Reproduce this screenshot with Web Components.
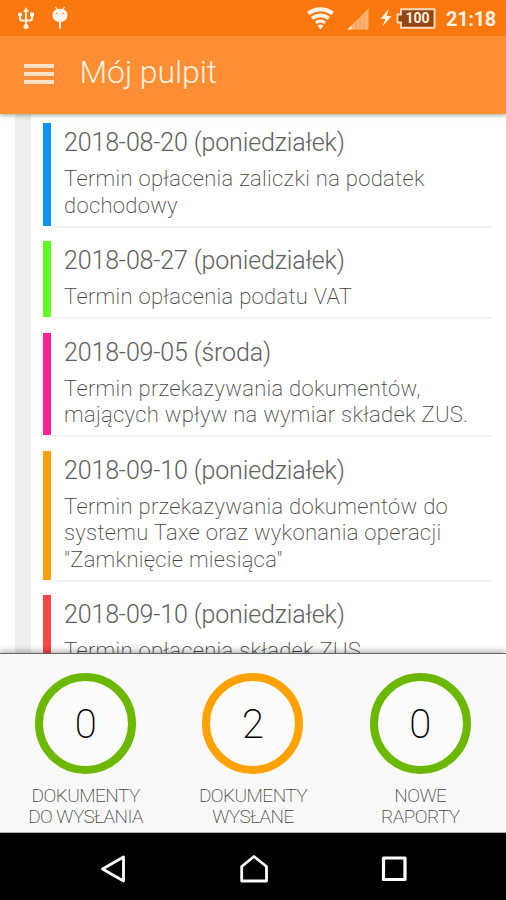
<!DOCTYPE html>
<html lang="pl">
<head>
<meta charset="utf-8">
<title>Mój pulpit</title>
<style>
  html, body { height: 100%; }
  body {
    margin: 0;
    overflow: hidden;
    background: #fff;
    color: #444;
    font-family: Roboto, "Liberation Sans", sans-serif;
    font-weight: 300;
  }
</style>
</head>
<body>
<dashboard-app>
  <status-bar slot="top" time="21:18" battery="100"></status-bar>
  <app-bar slot="top">Mój pulpit</app-bar>

  <term-item color="#0b93fc" date="2018-08-20 (poniedziałek)">Termin opłacenia zaliczki na podatek<br>dochodowy</term-item>
  <term-item color="#5ffc28" date="2018-08-27 (poniedziałek)">Termin opłacenia podatu VAT</term-item>
  <term-item color="#fc2498" date="2018-09-05 (środa)">Termin przekazywania dokumentów,<br>mających wpływ na wymiar składek ZUS.</term-item>
  <term-item color="#fca10b" date="2018-09-10 (poniedziałek)">Termin przekazywania dokumentów do<br>systemu Taxe oraz wykonania operacji<br>"Zamknięcie miesiąca"</term-item>
  <term-item color="#fc4548" date="2018-09-10 (poniedziałek)">Termin opłacenia składek ZUS</term-item>

  <doc-counter slot="counters" color="#6cb800" value="0">DOKUMENTY<br>DO WYSŁANIA</doc-counter>
  <doc-counter slot="counters" color="#ffa200" value="2">DOKUMENTY<br>WYSŁANE</doc-counter>
  <doc-counter slot="counters" color="#6cb800" value="0">NOWE<br>RAPORTY</doc-counter>

  <nav-bar slot="bottom"></nav-bar>
</dashboard-app>

<script>
class BaseElement extends HTMLElement {
  constructor () {
    super()
    const template = document.createElement('template')
    template.innerHTML = this.constructor.template()
    this.attachShadow({ mode: 'open' })
    this.shadowRoot.appendChild(document.importNode(template.content, true))
  }
}

class DashboardApp extends BaseElement {
  static template () {
    return `
      <style>
        :host {
          display: flex;
          flex-direction: column;
          width: 506px;
          height: 900px;
          overflow: hidden;
        }
        .top {
          flex: none;
          z-index: 1;
          box-shadow: 0 1px 5px rgba(0, 0, 0, .4);
        }
        .list {
          flex: 1;
          min-height: 0;
          display: flex;
          overflow: hidden;
        }
        .rail {
          flex: none;
          width: 16px;
          margin-left: 15px;
          background: #eee;
        }
        .items {
          flex: 1;
          display: flex;
          flex-direction: column;
          gap: 15.600px;
          padding: 9.300px 14px 0 11.5px;
        }
        .counters {
          flex: none;
          box-sizing: border-box;
          height: 180px;
          display: flex;
          justify-content: space-between;
          padding: 19px 2px 0 2px;
          border-top: 1px solid #666;
          border-bottom: 1px solid #aaa;
          background: #f9f9f9;
          box-shadow: 0 -1px 7px rgba(0, 0, 0, .4);
          z-index: 1;
        }
      </style>
      <div class="top"><slot name="top"></slot></div>
      <div class="list">
        <div class="rail"></div>
        <div class="items"><slot></slot></div>
      </div>
      <div class="counters"><slot name="counters"></slot></div>
      <slot name="bottom"></slot>
    `
  }
}

class StatusBar extends BaseElement {
  connectedCallback () {
    this.shadowRoot.querySelector('.time').textContent = this.getAttribute('time')
    this.shadowRoot.querySelector('.level').textContent = this.getAttribute('battery')
  }

  static template () {
    return `
      <style>
        :host {
          display: flex;
          align-items: center;
          height: 36px;
          background: #fa780d;
          color: #fff3e6;
        }
        svg { display: block; flex: none; }
        .usb { margin-left: 17px; }
        .debug { margin-left: 17px; }
        .wifi { margin-left: auto; }
        .signal { margin-left: 13px; }
        .bolt { margin-left: 11px; }
        .battery {
          display: grid;
          margin-left: 4px;
        }
        .battery > * { grid-area: 1 / 1; }
        .level {
          width: 33px;
          margin-left: 5px;
          line-height: 21px;
          text-align: center;
          font-size: 14px;
          font-weight: 700;
        }
        .time {
          width: 50px;
          margin: 2px 10px 0 10px;
          font-size: 20px;
          line-height: 24px;
          letter-spacing: -.3px;
          font-weight: 700;
          white-space: nowrap;
        }
      </style>
      <svg class="usb" width="18" height="24" viewBox="0 0 18 24">
        <g fill="none" stroke="#fff3e6" stroke-width="2">
          <path d="M9 4v17M3 9v3.5q0 2 2 2h8q2 0 2-2V9"/>
        </g>
        <g fill="#fff3e6">
          <path d="M9 1l2.800 5H6.200z"/>
          <circle cx="3" cy="8.500" r="2.100"/>
          <rect x="13" y="6.500" width="4" height="4"/>
          <circle cx="9" cy="20.500" r="2.500"/>
        </g>
      </svg>
      <svg class="debug" width="16" height="24" viewBox="0 0 16 24">
        <g fill="#fff3e6">
          <path d="M.5 9Q.5 4.500 4.500 3.500L3 1.200 4 .7 5.600 3Q8 2.400 10.400 3L12 .7l1 .5-1.500 2.300Q15.500 4.500 15.500 9q0 6-6.500 7v6.500H7V16Q.5 15 .5 9z"/>
        </g>
        <circle cx="4.800" cy="7.500" r=".7" fill="#fa780d"/>
        <circle cx="11.200" cy="7.500" r=".7" fill="#fa780d"/>
      </svg>
      <svg class="wifi" width="27" height="24" viewBox="0 0 27 24">
        <g fill="none" stroke="#fff3e6" stroke-width="4">
          <path d="M1.200 7.300Q13.500-.8 25.800 7.300"/>
          <path d="M5 12.200Q13.500 6.500 22 12.200" stroke-width="3.600"/>
          <path d="M8.700 16.700Q13.500 13.500 18.300 16.700" stroke-width="3"/>
        </g>
        <path d="M10.500 19.500Q13.500 17.500 16.500 19.500L13.500 23.500z" fill="#fff3e6"/>
      </svg>
      <svg class="signal" width="22" height="24" viewBox="0 0 22 24">
        <path d="M.5 23.500L21.500 2.500v21z" fill="#fdb173"/>
        <path d="M.5 23.500L4.500 19.500v4z" fill="#ffe9d5"/>
        <path d="M9 15v9M13 11v13M17 7v17" stroke="#fb9646" stroke-width=".8"/>
      </svg>
      <svg class="bolt" width="12" height="20" viewBox="0 0 12 20">
        <path d="M8.500 1L.5 11h4.800L2.500 18.500 11.500 8H6.800z" fill="#fff3e6"/>
      </svg>
      <div class="battery">
        <svg width="40" height="21" viewBox="0 0 40 21">
          <path d="M5 1.200h33.500v18.600H5V14.500H1.500v-8H5z" fill="#96450c" stroke="#ffdcc0" stroke-width="1.900"/>
        </svg>
        <span class="level"></span>
      </div>
      <span class="time"></span>
    `
  }
}

class AppBar extends BaseElement {
  static template () {
    return `
      <style>
        :host {
          display: flex;
          align-items: center;
          height: 78px;
          background: #fd8e33;
          color: #fff0e0;
        }
        .menu {
          display: flex;
          flex-direction: column;
          gap: 4.400px;
          width: 30px;
          margin: -2px 26px 0 23.500px;
        }
        .menu i {
          height: 4px;
          background: #ffe3c8;
        }
        .title {
          font-size: 32px;
          line-height: 40px;
          letter-spacing: -.1px;
          margin-top: -7px;
          white-space: nowrap;
        }
      </style>
      <div class="menu"><i></i><i></i><i></i></div>
      <div class="title"><slot></slot></div>
    `
  }
}

class TermItem extends BaseElement {
  connectedCallback () {
    this.style.setProperty('--color', this.getAttribute('color'))
    this.shadowRoot.querySelector('.date').textContent = this.getAttribute('date')
  }

  static template () {
    return `
      <style>
        :host {
          display: grid;
          grid-template-columns: 8.500px 1fr;
          flex: none;
        }
        .bar { background: var(--color); }
        .body {
          padding: 4px 0 6px 13px;
          box-shadow: 0 1.500px #eee;
          white-space: nowrap;
        }
        .date {
          font-size: 25px;
          line-height: 32px;
          letter-spacing: -.15px;
          color: #606060;
        }
        .text {
          padding-top: 7px;
          font-size: 22px;
          line-height: 26.700px;
          letter-spacing: .3px;
          font-weight: 200;
          color: #444;
        }
      </style>
      <div class="bar"></div>
      <div class="body">
        <div class="date"></div>
        <div class="text"><slot></slot></div>
      </div>
    `
  }
}

class DocCounter extends BaseElement {
  connectedCallback () {
    this.style.setProperty('--color', this.getAttribute('color'))
    this.shadowRoot.querySelector('.ring').textContent = this.getAttribute('value')
  }

  static template () {
    return `
      <style>
        :host {
          display: flex;
          flex-direction: column;
          align-items: center;
          width: 167.300px;
        }
        .ring {
          box-sizing: border-box;
          width: 101px;
          height: 101px;
          border: 8px solid var(--color);
          border-radius: 50%;
          background: #fcfcfc;
          color: #000;
          text-align: center;
          font-size: 40px;
          font-weight: 200;
          line-height: 87px;
        }
        .label {
          margin-top: 10.500px;
          font-size: 19px;
          line-height: 21px;
          letter-spacing: -.55px;
          font-weight: 200;
          text-align: center;
          white-space: nowrap;
          color: #444;
        }
      </style>
      <div class="ring"></div>
      <div class="label"><slot></slot></div>
    `
  }
}

class NavBar extends BaseElement {
  static template () {
    return `
      <style>
        :host {
          flex: none;
          display: flex;
          align-items: center;
          justify-content: space-between;
          box-sizing: border-box;
          height: 67px;
          padding: 5px 98px 0 99px;
          background: #000;
        }
        svg { display: block; }
      </style>
      <svg width="28" height="30" viewBox="0 0 28 30">
        <path d="M3.500 15L24.500 3v24z" fill="none" stroke="#fff" stroke-width="2.800" stroke-linejoin="round"/>
      </svg>
      <svg width="30" height="30" viewBox="0 0 30 30">
        <path d="M2.700 27V12.500L15 2.500l12.500 10V27z" fill="none" stroke="#fff" stroke-width="2.800" stroke-linejoin="round"/>
      </svg>
      <svg width="28" height="30" viewBox="0 0 28 30">
        <rect x="3.500" y="4" width="21.500" height="21.500" fill="none" stroke="#fff" stroke-width="3.200" stroke-linejoin="round"/>
      </svg>
    `
  }
}

customElements.define('dashboard-app', DashboardApp)
customElements.define('status-bar', StatusBar)
customElements.define('app-bar', AppBar)
customElements.define('term-item', TermItem)
customElements.define('doc-counter', DocCounter)
customElements.define('nav-bar', NavBar)
</script>
</body>
</html>
